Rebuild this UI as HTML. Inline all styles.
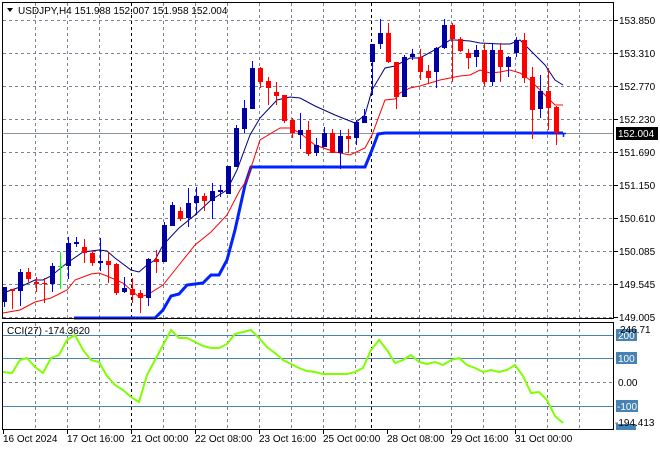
<!DOCTYPE html>
<html><head><meta charset="utf-8"><style>
html,body{margin:0;padding:0;background:#fff;}
svg{display:block;font-family:"Liberation Sans",sans-serif;}
</style></head><body>
<svg width="660" height="450" viewBox="0 0 660 450" xmlns="http://www.w3.org/2000/svg">
<rect width="660" height="450" fill="#fff"/>
<g stroke="#7a8591" stroke-width="1" stroke-dasharray="3,3" fill="none">
<path d="M3 20.5H613M3 53.5H613M3 86.5H613M3 119.5H613M3 152.5H613M3 185.5H613M3 218.5H613M3 251.5H613M3 284.5H613M3 317.5H613"/>
<path d="M35.5 3V318M67.5 3V318M99.5 3V318M163.5 3V318M195.5 3V318M227.5 3V318M259.5 3V318M291.5 3V318M323.5 3V318M355.5 3V318M419.5 3V318M451.5 3V318M483.5 3V318M515.5 3V318M547.5 3V318M579.5 3V318"/>
<path d="M35.5 323V429M67.5 323V429M99.5 323V429M163.5 323V429M195.5 323V429M227.5 323V429M259.5 323V429M291.5 323V429M323.5 323V429M355.5 323V429M419.5 323V429M451.5 323V429M483.5 323V429M515.5 323V429M547.5 323V429M579.5 323V429"/>
<path d="M3 382.5H613"/>
</g>
<g stroke="#000" stroke-dasharray="3,3"><path d="M131.5 3V318M371.5 3V318M131.5 323V429M371.5 323V429"/></g>
<g stroke="#4682b4"><path d="M3 335.5H613M3 358.5H613M3 406.5H613"/></g>
<path d="M3 133.5H613" stroke="#8a949e"/>
<polyline fill="none" stroke="#0022ff" stroke-width="3" points="74,318 155,318 163,310 171,296 179,294 187,285 195,284 203,283 211,275 219,275 227,260 235,230 245,185 251,167 365,167 372,150 378,134 385,133 563,133"/>
<polyline fill="none" stroke="#000080" stroke-width="1" points="3,293 20,287 35,280 43,280 51,276 67,263 83,252 99,250 107,251 115,258 131,270 139,272 147,265 155,260 163,245 179,228 195,215 211,200 227,190 237,170 250,135 260,118 277,100 290,97 300,98 315,106 335,115 355,123 365,115 372,90 385,68 395,66 410,58 420,58 440,47 450,40 455,40 470,41 480,43 500,44 510,44 520,40 530,50 545,65 555,80 563,85"/>
<polyline fill="none" stroke="#ff0000" stroke-width="1" points="3,313 20,310 35,302 51,298 67,290 75,280 91,274 99,273 107,276 123,283 139,297 147,295 163,285 179,265 195,245 211,232 227,215 240,190 247,180 260,140 280,128 290,128 300,133 315,145 335,152 350,155 365,148 372,135 385,100 395,99 400,93 410,88 420,86 430,83 440,80 450,78 460,76 470,75 480,70 490,73 500,72 510,70 520,73 530,80 545,95 555,105 563,105"/>
<g>
<g stroke="#0000ff"><path d="M4.5 287V307M20.5 269V306M52.5 263V292M68.5 237V279M76.5 237V247M100.5 238V271M124.5 277V293M148.5 258V306M164.5 222V262M172.5 202V226M188.5 188V227M196.5 187V215M212.5 183V219M220.5 185V197M228.5 166V194M236.5 125V167M244.5 100V133M252.5 61V109M300.5 113V149M316.5 138V156M324.5 127V147M340.5 130V169M356.5 120V145M364.5 109V123M372.5 44V95M380.5 19V49M404.5 55V97M412.5 49V60M436.5 47V88M444.5 19V49M476.5 45V67M492.5 43V86M508.5 56V77M516.5 37V57M540.5 75V118"/></g>
<g fill="#0000a0">
<rect x="2" y="287" width="5" height="15"/><rect x="18" y="272" width="5" height="19"/><rect x="50" y="266" width="5" height="18"/><rect x="66" y="243" width="5" height="23"/><rect x="74" y="242" width="5" height="2"/><rect x="98" y="261" width="5" height="2"/><rect x="122" y="288" width="5" height="4"/><rect x="146" y="259" width="5" height="39"/><rect x="162" y="225" width="5" height="37"/><rect x="170" y="205" width="5" height="21"/><rect x="186" y="203" width="5" height="15"/><rect x="194" y="196" width="5" height="7"/><rect x="210" y="191" width="5" height="10"/><rect x="218" y="190" width="5" height="2"/><rect x="226" y="166" width="5" height="28"/><rect x="234" y="128" width="5" height="39"/><rect x="242" y="108" width="5" height="21"/><rect x="250" y="68" width="5" height="41"/><rect x="298" y="130" width="5" height="5"/><rect x="314" y="145" width="5" height="8"/><rect x="322" y="133" width="5" height="14"/><rect x="338" y="136" width="5" height="17"/><rect x="354" y="122" width="5" height="16"/><rect x="362" y="116" width="5" height="7"/><rect x="370" y="44" width="5" height="18"/><rect x="378" y="33" width="5" height="11"/><rect x="402" y="57" width="5" height="40"/><rect x="410" y="54" width="5" height="3"/><rect x="434" y="48" width="5" height="24"/><rect x="442" y="25" width="5" height="23"/><rect x="474" y="50" width="5" height="7"/><rect x="490" y="50" width="5" height="32"/><rect x="506" y="57" width="5" height="10"/><rect x="514" y="40" width="5" height="13"/><rect x="538" y="91" width="5" height="18"/>
</g>
<g stroke="#ff0000"><path d="M12.5 290V309M28.5 268V282M36.5 277V292M44.5 278V303M84.5 239V263M92.5 250V266M108.5 252V283M116.5 263V295M132.5 278V303M140.5 290V313M156.5 250V273M180.5 207V221M204.5 193V211M260.5 67V88M268.5 77V105M276.5 82V105M284.5 95V123M292.5 118V138M308.5 121V156M332.5 129V153M348.5 129V153M388.5 23V63M396.5 62V109M420.5 49V80M428.5 65V83M452.5 23V82M460.5 37V52M468.5 49V69M484.5 43V86M500.5 43V82M524.5 33V83M532.5 67V139M548.5 68V130M556.5 106V145"/></g>
<g fill="#ff0000">
<rect x="10" y="289" width="5" height="2"/><rect x="26" y="272" width="5" height="7"/><rect x="34" y="282" width="5" height="2"/><rect x="42" y="283" width="5" height="1"/><rect x="82" y="247" width="5" height="6"/><rect x="90" y="253" width="5" height="10"/><rect x="106" y="261" width="5" height="4"/><rect x="114" y="264" width="5" height="29"/><rect x="130" y="289" width="5" height="6"/><rect x="138" y="293" width="5" height="5"/><rect x="154" y="259" width="5" height="3"/><rect x="178" y="211" width="5" height="8"/><rect x="202" y="196" width="5" height="5"/><rect x="258" y="68" width="5" height="14"/><rect x="266" y="81" width="5" height="7"/><rect x="274" y="92" width="5" height="4"/><rect x="282" y="95" width="5" height="26"/><rect x="290" y="120" width="5" height="13"/><rect x="306" y="130" width="5" height="24"/><rect x="330" y="133" width="5" height="20"/><rect x="346" y="136" width="5" height="3"/><rect x="386" y="33" width="5" height="29"/><rect x="394" y="62" width="5" height="35"/><rect x="418" y="57" width="5" height="15"/><rect x="426" y="71" width="5" height="7"/><rect x="450" y="25" width="5" height="14"/><rect x="458" y="39" width="5" height="12"/><rect x="466" y="53" width="5" height="5"/><rect x="482" y="50" width="5" height="32"/><rect x="498" y="50" width="5" height="17"/><rect x="522" y="40" width="5" height="38"/><rect x="530" y="77" width="5" height="33"/><rect x="546" y="91" width="5" height="17"/><rect x="554" y="107" width="5" height="26"/>
</g>
<path d="M60.5 252V289M58 266.5H63" stroke="#00ff00"/>
<path d="M560 133.5H566M563.5 133V137" stroke="#0022ff" stroke-width="1.5"/>
</g>
<polyline fill="none" stroke="#7fff00" stroke-width="2" points="3,372 12,373 20,360 27,358 35,367 43,373 51,358 59,355 67,340 75,335 83,350 91,360 99,362 107,376 115,385 123,390 131,397 139,402 147,375 155,360 163,345 171,330 179,338 187,338 195,342 203,346 211,348 219,348 227,344 235,334 243,332 251,330 259,338 267,347 275,353 283,360 291,364 299,368 307,371 315,372 323,374 331,374 347,374 355,372 363,368 371,350 379,340 387,350 395,363 403,360 411,355 419,362 427,364 435,362 443,365 451,360 459,358 467,365 475,368 483,372 491,370 499,372 507,370 515,365 523,376 531,393 539,392 547,400 555,416 563,423"/>
<rect x="2.5" y="2.5" width="611" height="316" fill="none" stroke="#000"/>
<rect x="2.5" y="322.5" width="611" height="107" fill="none" stroke="#000"/>
<path d="M7 8H13L10 12Z" fill="#000"/>
<text x="18" y="14" font-size="10" fill="#000">USDJPY,H4  151.988 152.007 151.958 152.004</text>
<text x="7" y="334" font-size="10" fill="#000">CCI(27) -174.3620</text>
<g font-size="10" fill="#000">
<path d="M614 20.5H618M614 53.5H618M614 86.5H618M614 119.5H618M614 152.5H618M614 185.5H618M614 218.5H618M614 251.5H618M614 284.5H618M614 317.5H618" stroke="#000"/>
<text x="619" y="24">153.850</text><text x="619" y="57">153.310</text><text x="619" y="90">152.770</text><text x="619" y="123">152.230</text><text x="619" y="156">151.690</text><text x="619" y="189">151.150</text><text x="619" y="222">150.610</text><text x="619" y="255">150.085</text><text x="619" y="288">149.545</text><text x="619" y="321">149.005</text>
<rect x="616" y="127" width="42" height="13" fill="#000"/><text x="618" y="137" fill="#fff">152.004</text>
<rect x="616" y="329" width="21" height="12" fill="#4682b4"/><text x="618" y="339" fill="#fff">200</text>
<text x="620" y="333">246.71</text>
<rect x="616" y="352" width="21" height="12" fill="#4682b4"/><text x="618" y="362" fill="#fff">100</text>
<text x="618" y="386">0.00</text>
<rect x="616" y="400" width="22" height="12" fill="#4682b4"/><text x="617" y="410" fill="#fff">-100</text>
<rect x="616" y="424" width="20" height="6" fill="#4682b4"/>
<text x="615" y="426">-194.413</text>
</g>
<g font-size="10" fill="#000">
<path d="M3.5 430V434M67.5 430V434M131.5 430V434M195.5 430V434M259.5 430V434M323.5 430V434M387.5 430V434M451.5 430V434M515.5 430V434" stroke="#000"/>
<text x="3" y="442">16 Oct 2024</text><text x="67" y="442">17 Oct 16:00</text><text x="131" y="442">21 Oct 00:00</text><text x="195" y="442">22 Oct 08:00</text><text x="259" y="442">23 Oct 16:00</text><text x="323" y="442">25 Oct 00:00</text><text x="387" y="442">28 Oct 08:00</text><text x="451" y="442">29 Oct 16:00</text><text x="515" y="442">31 Oct 00:00</text>
</g>
</svg>
</body></html>
